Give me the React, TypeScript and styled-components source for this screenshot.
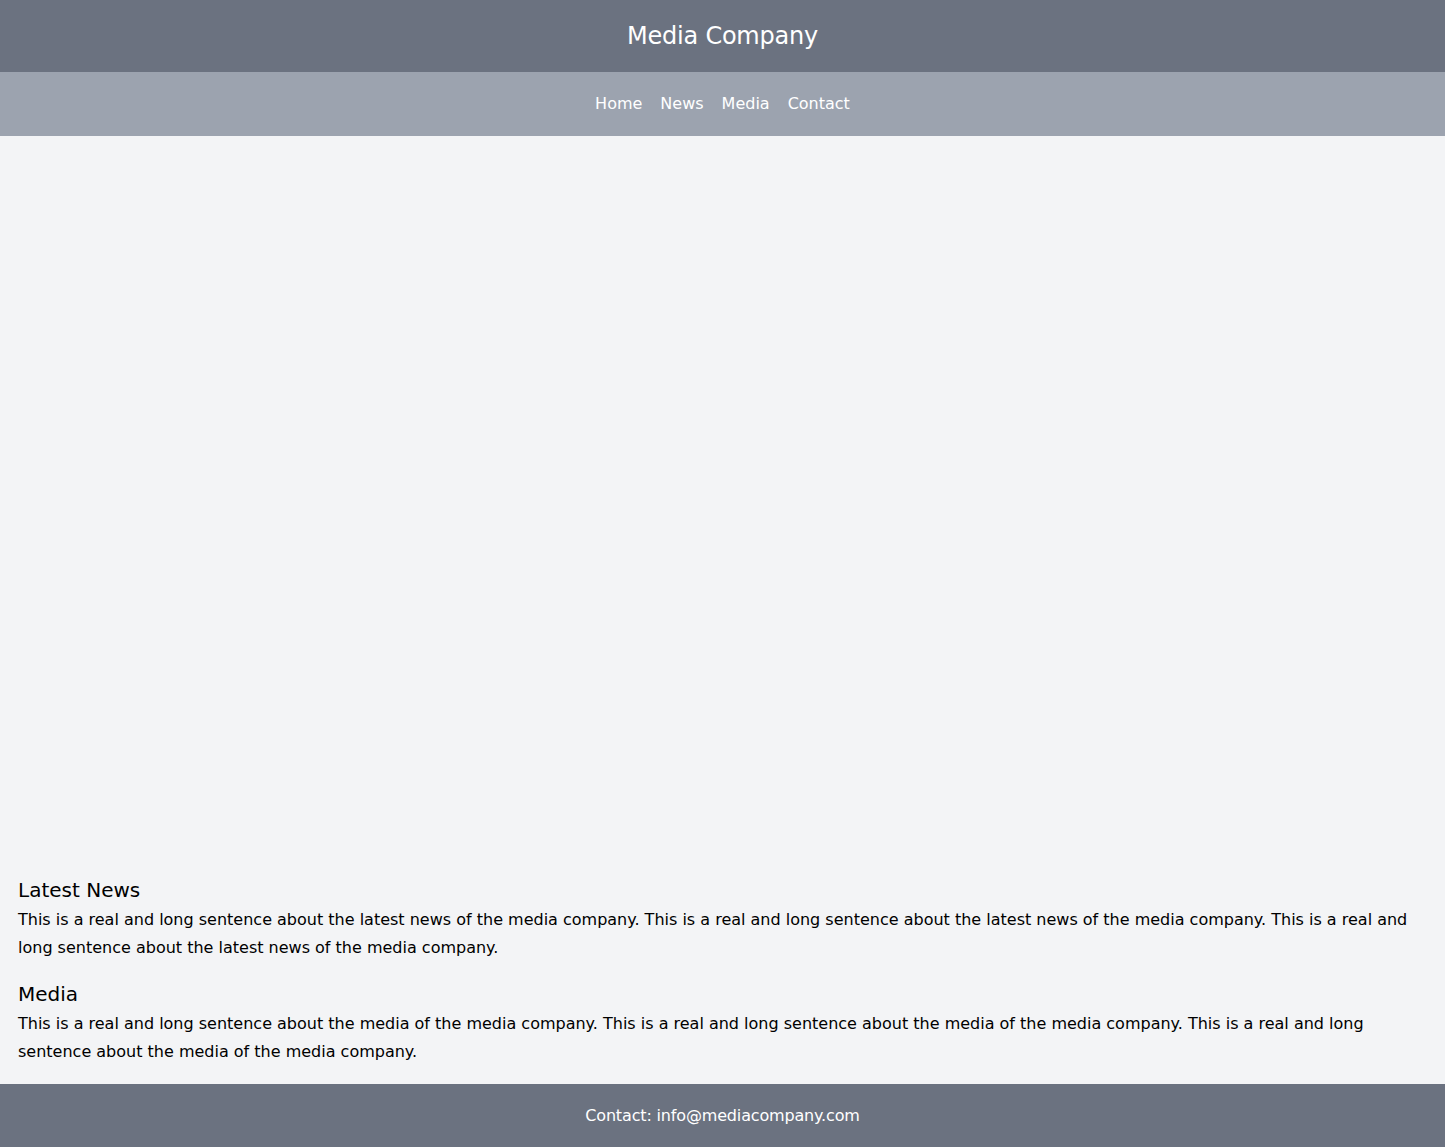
import React from "react";
import styled, { createGlobalStyle } from "styled-components";

const GlobalStyle = createGlobalStyle`
  body {
    margin: 0;
    background: #f3f4f6;
    font-family: "DejaVu Sans", "Noto Sans", sans-serif;
    color: #000000;
  }
`;

const Page = styled.div`
  display: flex;
  flex-direction: column;
  min-height: 100vh;
`;

const Header = styled.header`
  background: #6b7280;
  padding: 20px 16px;
  text-align: center;
`;

const Title = styled.h1`
  margin: 0;
  font-size: 24px;
  line-height: 32px;
  font-weight: 400;
  letter-spacing: -0.01em;
  color: #ffffff;
`;

const Nav = styled.nav`
  background: #9ca3af;
  padding: 20px 16px;
  display: flex;
  justify-content: center;
  gap: 18px;
`;

const NavLink = styled.a`
  font-size: 16px;
  line-height: 24px;
  color: #ffffff;
  text-decoration: none;
  cursor: pointer;
`;

const Main = styled.main`
  flex: 1;
  padding: 16px 18px 0;
`;

const MediaArea = styled.div`
  height: 706px;
  margin-bottom: 18px;
`;

const Section = styled.section`
  margin-bottom: 18px;
`;

const SectionTitle = styled.h2`
  margin: 0 0 2px;
  font-size: 20px;
  line-height: 28px;
  font-weight: 400;
`;

const Text = styled.p`
  margin: 0;
  font-size: 16px;
  line-height: 28px;
`;

const Footer = styled.footer`
  background: #6b7280;
  padding: 20px 16px;
  text-align: center;
  font-size: 16px;
  line-height: 24px;
  letter-spacing: -0.01em;
  color: #ffffff;
`;

const newsText =
  "This is a real and long sentence about the latest news of the media company. ";
const mediaText =
  "This is a real and long sentence about the media of the media company. ";

const App = () => {
  return (
    <Page>
      <GlobalStyle />
      <Header>
        <Title>Media Company</Title>
      </Header>
      <Nav>
        <NavLink>Home</NavLink>
        <NavLink>News</NavLink>
        <NavLink>Media</NavLink>
        <NavLink>Contact</NavLink>
      </Nav>
      <Main>
        <MediaArea />
        <Section>
          <SectionTitle>Latest News</SectionTitle>
          <Text>{newsText.repeat(3).trim()}</Text>
        </Section>
        <Section>
          <SectionTitle>Media</SectionTitle>
          <Text>{mediaText.repeat(3).trim()}</Text>
        </Section>
      </Main>
      <Footer>Contact: info@mediacompany.com</Footer>
    </Page>
  );
};

export default App;
